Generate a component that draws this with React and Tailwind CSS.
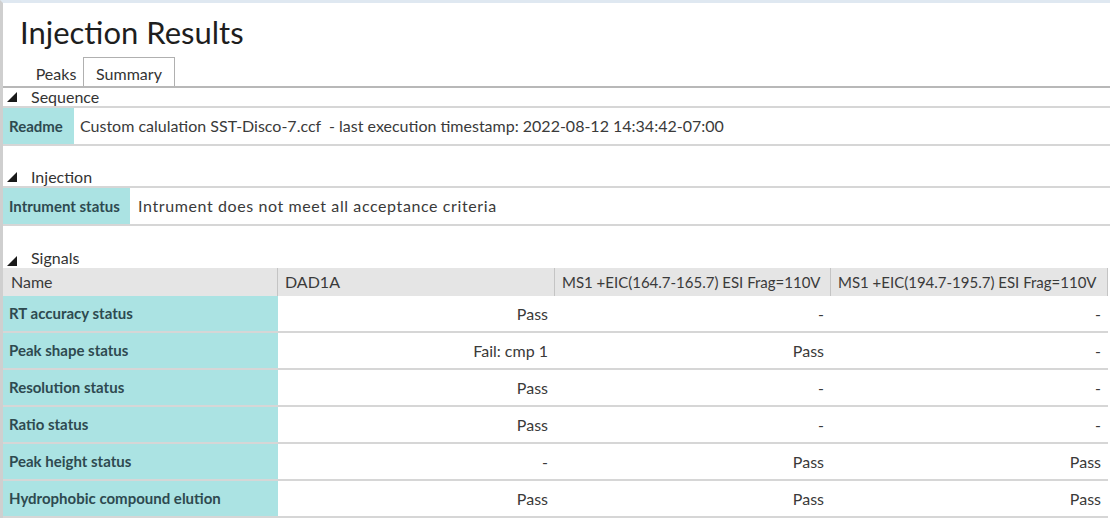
import React from 'react'

const rows = [
  { name: 'RT accuracy status', vals: ['Pass', '-', '-'] },
  { name: 'Peak shape status', vals: ['Fail: cmp 1', 'Pass', '-'] },
  { name: 'Resolution status', vals: ['Pass', '-', '-'] },
  { name: 'Ratio status', vals: ['Pass', '-', '-'] },
  { name: 'Peak height status', vals: ['-', 'Pass', 'Pass'] },
  { name: 'Hydrophobic compound elution', vals: ['Pass', 'Pass', 'Pass'] },
]

function Tri() {
  return (
    <svg width="10" height="10" viewBox="0 0 10 10" className="shrink-0">
      <polygon points="10,0 10,10 0,10" fill="#1a1a1a" />
    </svg>
  )
}

function SectionHead({ title }) {
  return (
    <div className="h-[20px] flex items-center gap-[14px] pl-[4px] border-b-2 border-[#d6d6d6]">
      <Tri />
      <span className="text-[16px] text-[#333] leading-none">{title}</span>
    </div>
  )
}

export default function App() {
  return (
    <div className="w-[1110px] h-[518px] overflow-hidden bg-white border-t-[3px] border-t-[#dfe8f1] border-l-[3px] border-l-[#cfcfcf] font-['Lato',sans-serif] text-[#3a3a3a]">
      <div className="h-[56px] flex items-center pl-[17px] pt-[2px]">
        <h1 className="text-[31px] text-[#1e1e1e] leading-none">Injection Results</h1>
      </div>

      <div className="h-[29px] flex items-end border-b-2 border-[#b8b8b8]">
        <div className="ml-[26px] w-[54px] h-[28px] flex items-center justify-center pt-[3px] text-[16px] text-[#333]">Peaks</div>
        <div className="w-[92px] h-[29px] flex items-center justify-center pt-[3px] text-[16px] text-[#333] border border-b-0 border-[#b0b0b0] bg-white">Summary</div>
      </div>

      <SectionHead title="Sequence" />
      <div className="h-[38px] flex border-b-2 border-[#d6d6d6]">
        <div className="w-[71px] bg-[#abe3e3] flex items-center pl-[6px] text-[15px] font-bold text-[#2e4a50]">Readme</div>
        <div className="flex items-center pl-[6px] text-[16px]">
          Custom calulation SST-Disco-7.ccf&nbsp; - last execution timestamp: 2022-08-12 14:34:42-07:00
        </div>
      </div>

      <div className="h-[22px]" />
      <SectionHead title="Injection" />
      <div className="h-[38px] flex border-b-2 border-[#d6d6d6]">
        <div className="w-[127px] bg-[#abe3e3] flex items-center pl-[6px] text-[15px] font-bold text-[#2e4a50]">Intrument status</div>
        <div className="flex items-center pl-[8px] text-[16px] tracking-[0.6px]">Intrument does not meet all acceptance criteria</div>
      </div>

      <div className="h-[20px]" />
      <div className="h-[22px] flex items-end gap-[14px] pl-[4px] pb-[2px]">
        <Tri />
        <span className="text-[16px] text-[#333] leading-none">Signals</span>
      </div>

      <div className="grid grid-cols-[275px_277px_276px_277px]">
        <div className="h-[28px] bg-[#e5e5e5] border-r border-[#c4c4c4] flex items-center pl-[8px] text-[16px]">Name</div>
        <div className="h-[28px] bg-[#e5e5e5] border-r border-[#c4c4c4] flex items-center pl-[7px] text-[16px]">DAD1A</div>
        <div className="h-[28px] bg-[#e5e5e5] border-r border-[#c4c4c4] flex items-center pl-[7px] text-[15px]">MS1 +EIC(164.7-165.7) ESI Frag=110V</div>
        <div className="h-[28px] bg-[#e5e5e5] border-r border-[#c4c4c4] flex items-center pl-[7px] text-[15px]">MS1 +EIC(194.7-195.7) ESI Frag=110V</div>
        {rows.map(r => (
          <React.Fragment key={r.name}>
            <div className="h-[37px] bg-[#abe3e3] border-b-2 border-[#d6d6d6] flex items-center pl-[6px] text-[15px] font-bold text-[#2e4a50]">{r.name}</div>
            {r.vals.map((v, i) => (
              <div key={i} className="h-[37px] border-b-2 border-[#d6d6d6] flex items-center justify-end pr-[7px] text-[16px]">{v}</div>
            ))}
          </React.Fragment>
        ))}
      </div>
    </div>
  )
}
